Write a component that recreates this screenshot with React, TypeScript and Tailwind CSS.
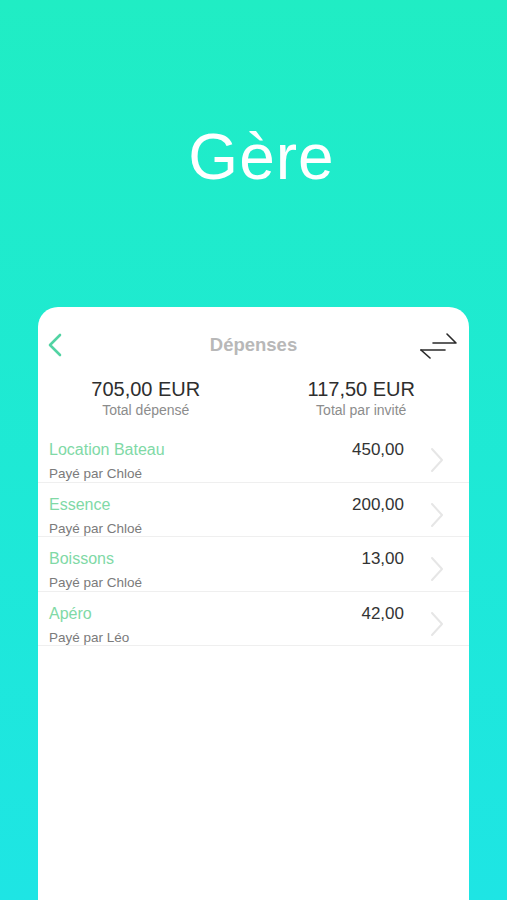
const expenses = [
  { title: 'Location Bateau', amount: '450,00', payer: 'Chloé' },
  { title: 'Essence', amount: '200,00', payer: 'Chloé' },
  { title: 'Boissons', amount: '13,00', payer: 'Chloé' },
  { title: 'Apéro', amount: '42,00', payer: 'Léo' },
]

const IconBack = () => (
  <svg width="16" height="24" viewBox="0 0 16 24" fill="none" stroke="#52d3a3" strokeWidth="2.6" strokeLinecap="round" strokeLinejoin="round">
    <polyline points="13 2 3 12 13 22" />
  </svg>
)

const IconSwap = () => (
  <svg width="40" height="30" viewBox="0 0 40 30" fill="none" stroke="#2a2a2a" strokeWidth="1.6" strokeLinecap="round" strokeLinejoin="round">
    <path d="M14 14H37L28 5" />
    <path d="M2 21H26" />
    <path d="M2 21L11 29" />
  </svg>
)

const IconChevron = () => (
  <svg width="14" height="26" viewBox="0 0 14 26" fill="none" stroke="#e6e6e6" strokeWidth="2" strokeLinecap="round" strokeLinejoin="round">
    <polyline points="2 2 12 13 2 24" />
  </svg>
)

function ExpenseRow({ title, amount, payer }: { title: string; amount: string; payer: string }) {
  return (
    <div className="flex items-start border-b border-[#efefef] pl-[11px] pr-[25px]">
      <div className="flex-1 pt-3">
        <div className="flex items-center justify-between">
          <span className="text-[16px] leading-5 text-[#80d9a6]">{title}</span>
          <span className="text-[17px] leading-5 text-[#333333]">{amount}</span>
        </div>
        <p className="mt-[6px] text-[13.5px] leading-[15.5px] text-[#7b7b7b]">Payé par {payer}</p>
      </div>
      <div className="ml-[26px] mt-[19px]">
        <IconChevron />
      </div>
    </div>
  )
}

export default function App() {
  return (
    <div
      className="flex h-[900px] flex-col overflow-hidden bg-gradient-to-b from-[#20edc4] to-[#1ee5e4]"
      style={{ fontFamily: "'Liberation Sans', Arial, sans-serif" }}
    >
      {/* Titre */}
      <h1 className="pl-[16px] pt-[125px] text-center text-[64px] font-normal leading-[64px] tracking-[1px] text-white">
        Gère
      </h1>

      {/* Carte */}
      <div className="mx-[38px] mt-[118px] flex-1 rounded-t-[20px] bg-white">
        <div className="relative mt-[26px] flex h-[24px] items-center justify-center">
          <div className="absolute left-[9px] top-0">
            <IconBack />
          </div>
          <span className="text-[18.5px] font-bold leading-6 text-[#b8b8b8]">Dépenses</span>
          <div className="absolute right-[10px] -top-[4px]">
            <IconSwap />
          </div>
        </div>

        <div className="mt-[20px] grid grid-cols-2 text-center">
          <div>
            <p className="text-[20px] leading-6 text-[#2e2e2e]">705,00 EUR</p>
            <p className="mt-[1px] text-[14px] leading-4 text-[#8c8c8c]">Total dépensé</p>
          </div>
          <div>
            <p className="text-[20px] leading-6 text-[#2e2e2e]">117,50 EUR</p>
            <p className="mt-[1px] text-[14px] leading-4 text-[#8c8c8c]">Total par invité</p>
          </div>
        </div>

        <div className="mt-[10px]">
          {expenses.map(e => (
            <ExpenseRow key={e.title} {...e} />
          ))}
        </div>
      </div>
    </div>
  )
}
